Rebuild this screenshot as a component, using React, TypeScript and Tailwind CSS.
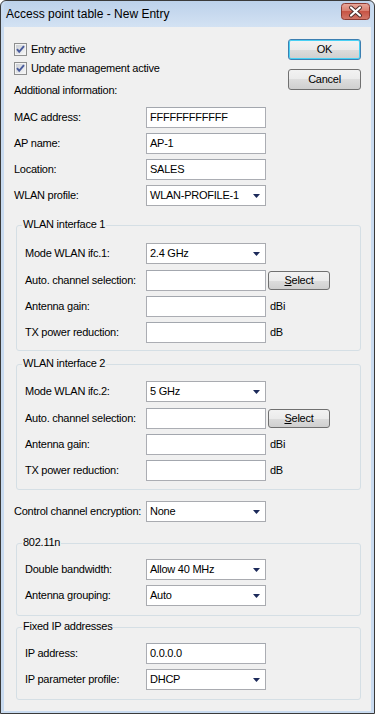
import React from "react";

const font = "font-['Liberation_Sans',Arial,sans-serif]";
const btnBg = "bg-[linear-gradient(#f2f2f2,#ebebeb_50%,#dddddd_50%,#cfcfcf)]";

function CheckBox({ label }: { label: string }) {
  return (
    <div className="flex h-[19px] items-center gap-[4px]">
      <svg width="13" height="13" viewBox="0 0 13 13">
        <defs>
          <linearGradient id="cbg" x1="0" y1="0" x2="1" y2="1">
            <stop offset="0" stopColor="#cbcfd5" />
            <stop offset="1" stopColor="#f6f6f6" />
          </linearGradient>
        </defs>
        <rect x="0.5" y="0.5" width="12" height="12" fill="#f4f4f4" stroke="#8e8f8f" />
        <rect x="2" y="2" width="9" height="9" fill="url(#cbg)" />
        <path d="M3 6.2 L5.2 8.8 L10 3.2" fill="none" stroke="#4a5c9c" strokeWidth="2" />
      </svg>
      <span>{label}</span>
    </div>
  );
}

function TextBox({ value = "" }: { value?: string }) {
  return (
    <div className="flex h-[21px] w-[120px] items-center border border-[#abadb3] border-t-[#a3a7ae] bg-white px-[3px]">
      {value}
    </div>
  );
}

function Combo({ value }: { value: string }) {
  return (
    <div className="flex h-[21px] w-[120px] items-center justify-between border border-[#a9abb0] bg-white pl-[3px] pr-[5px]">
      <span>{value}</span>
      <svg width="7" height="4" viewBox="0 0 7 4">
        <path d="M0 0 H7 L3.5 4 Z" fill="#1c2a5a" />
      </svg>
    </div>
  );
}

function Row({
  label,
  inner,
  className = "",
  children,
}: {
  label: string;
  inner?: boolean;
  className?: string;
  children: React.ReactNode;
}) {
  return (
    <div className={"flex h-[21px] items-center whitespace-nowrap " + className}>
      <span className={"shrink-0 " + (inner ? "w-[121px]" : "w-[132px]")}>{label}</span>
      {children}
    </div>
  );
}

function SelectButton() {
  return (
    <div
      className={
        "ml-[2px] flex h-[19px] w-[62px] items-center justify-center rounded-[3px] border border-[#707070] " +
        btnBg
      }
    >
      <span>
        <span className="underline">S</span>elect
      </span>
    </div>
  );
}

function Group({
  title,
  className,
  children,
}: {
  title: string;
  className: string;
  children: React.ReactNode;
}) {
  return (
    <div className={"relative ml-[12px] mr-[10px] rounded-[3px] border border-[#d5dfe5] pl-[8px] " + className}>
      <span className="absolute left-[5px] top-[-8px] bg-[#f0f0f0] px-[1px] leading-[13px]">{title}</span>
      {children}
    </div>
  );
}

function WlanGroup({ n, mode, className }: { n: number; mode: string; className: string }) {
  return (
    <Group title={"WLAN interface " + n} className={className}>
      <Row label={"Mode WLAN ifc." + n + ":"} inner>
        <Combo value={mode} />
      </Row>
      <Row label="Auto. channel selection:" inner className="mt-[6px]">
        <TextBox />
        <SelectButton />
      </Row>
      <Row label="Antenna gain:" inner className="mt-[5px]">
        <TextBox />
        <span className="ml-[4px]">dBi</span>
      </Row>
      <Row label="TX power reduction:" inner className="mt-[5px]">
        <TextBox />
        <span className="ml-[4px]">dB</span>
      </Row>
    </Group>
  );
}

export default function App() {
  return (
    <div className={"flex h-[714px] w-[375px] flex-col rounded-t-[6px] border border-[#3a3a3a] bg-[#c9dbf0] px-[3px] pb-[2px] text-[11px] leading-[13px] tracking-[-0.25px] text-black " + font}>
      {/* title bar */}
      <div className="flex h-[26px] shrink-0 items-center justify-between rounded-t-[5px] bg-[linear-gradient(#bcd1ea,#d3e2f3)] pl-[2px] pr-[1px]">
        <span className="text-[12px] tracking-normal">Access point table - New Entry</span>
        <svg width="29" height="17" viewBox="0 0 29 17" className="mt-[-5px]">
          <defs>
            <linearGradient id="cls" x1="0" y1="0" x2="0" y2="1">
              <stop offset="0" stopColor="#e9a99c" />
              <stop offset="0.5" stopColor="#d77b6c" />
              <stop offset="0.5" stopColor="#c75445" />
              <stop offset="1" stopColor="#d2786a" />
            </linearGradient>
          </defs>
          <rect x="0.5" y="0.5" width="28" height="16" rx="3" fill="url(#cls)" stroke="#8c3b33" />
          <path d="M10 4.5 L19 12.5 M19 4.5 L10 12.5" stroke="#4a2a28" strokeWidth="4" strokeLinecap="round" />
          <path d="M10 4.5 L19 12.5 M19 4.5 L10 12.5" stroke="#ffffff" strokeWidth="2.2" strokeLinecap="round" />
        </svg>
      </div>

      {/* client area */}
      <div className="flex flex-1 flex-col bg-[#f0f0f0]">
        <div className="flex">
          <div className="flex-1 pl-[10px] pt-[13px]">
            <CheckBox label="Entry active" />
            <CheckBox label="Update management active" />
            <div className="mt-[2px] flex h-[20px] items-center">Additional information:</div>
            <Row label="MAC address:" className="mt-[7px]">
              <TextBox value="FFFFFFFFFFFF" />
            </Row>
            <Row label="AP name:" className="mt-[5px]">
              <TextBox value="AP-1" />
            </Row>
            <Row label="Location:" className="mt-[5px]">
              <TextBox value="SALES" />
            </Row>
            <Row label="WLAN profile:" className="mt-[5px]">
              <Combo value="WLAN-PROFILE-1" />
            </Row>
          </div>
          <div className="mr-[10px] flex w-[73px] flex-col gap-[9px] pt-[12px]">
            <div
              className={
                "flex h-[21px] items-center justify-center rounded-[3px] border border-[#3c7fb1] shadow-[inset_0_0_0_1px_#48d0f4] " +
                btnBg
              }
            >
              OK
            </div>
            <div
              className={
                "flex h-[21px] items-center justify-center rounded-[3px] border border-[#707070] " + btnBg
              }
            >
              Cancel
            </div>
          </div>
        </div>

        <WlanGroup n={1} mode="2.4 GHz" className="mt-[19px] pt-[17px] pb-[7px]" />
        <WlanGroup n={2} mode="5 GHz" className="mt-[13px] pt-[16px] pb-[8px]" />

        <div className="mt-[11px] pl-[10px]">
          <Row label="Control channel encryption:">
            <Combo value="None" />
          </Row>
        </div>

        <Group title="802.11n" className="mt-[21px] pt-[15px] pb-[9px]">
          <Row label="Double bandwidth:" inner>
            <Combo value="Allow 40 MHz" />
          </Row>
          <Row label="Antenna grouping:" inner className="mt-[5px]">
            <Combo value="Auto" />
          </Row>
        </Group>

        <Group title="Fixed IP addresses" className="mt-[11px] pt-[15px] pb-[9px]">
          <Row label="IP address:" inner>
            <TextBox value="0.0.0.0" />
          </Row>
          <Row label="IP parameter profile:" inner className="mt-[5px]">
            <Combo value="DHCP" />
          </Row>
        </Group>
      </div>
    </div>
  );
}
